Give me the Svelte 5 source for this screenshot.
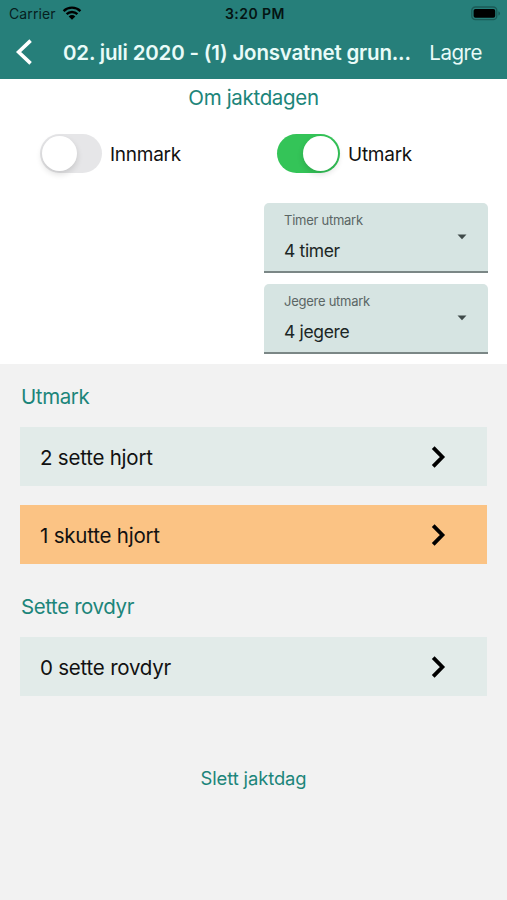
<script>
    let innmark = $state(false);
    let utmark = $state(true);

    const fields = [
        { label: "Timer utmark", value: "4 timer" },
        { label: "Jegere utmark", value: "4 jegere" },
    ];

    const sections = [
        {
            title: "Utmark",
            rows: [
                { text: "2 sette hjort" },
                { text: "1 skutte hjort", warning: true },
            ],
        },
        {
            title: "Sette rovdyr",
            rows: [{ text: "0 sette rovdyr" }],
        },
    ];
</script>

{#snippet toggle(label, checked, onclick)}
    <div class="toggle">
        <button
            class="switch"
            class:on={checked}
            role="switch"
            aria-checked={checked}
            aria-label={label}
            {onclick}
        >
            <span class="knob"></span>
        </button>
        <span class="toggle-label">{label}</span>
    </div>
{/snippet}

<div class="screen">
    <header>
        <div class="status-bar">
            <div class="carrier">
                <span>Carrier</span>
                <svg class="wifi" width="20" height="14" viewBox="0 0 20 14">
                    <path d="M1.6 5.1a12 12 0 0 1 16.8 0M4.6 8.2a7.7 7.7 0 0 1 10.8 0" />
                    <path class="dot" d="M10 13.7L6.7 10.4a4.7 4.7 0 0 1 6.6 0z" />
                </svg>
            </div>
            <span class="time">3:20 PM</span>
            <svg class="battery" width="30" height="15" viewBox="0 0 30 15">
                <rect class="shell" x=".8" y="1" width="25" height="12.6" rx="3.6" />
                <rect x="2.6" y="2.9" width="21.6" height="8.9" rx="1.8" />
                <path class="tip" d="M27.4 5.2c2.2.8 2.2 3.6 0 4.4z" />
            </svg>
        </div>
        <nav>
            <button class="back" aria-label="Tilbake">
                <svg width="18" height="28" viewBox="0 0 18 28">
                    <path d="M15.6 2.6L3.6 14L15.6 25.4" />
                </svg>
            </button>
            <h1>02. juli 2020 - (1) Jonsvatnet grun...</h1>
            <button class="save">Lagre</button>
        </nav>
    </header>

    <section class="about">
        <h2>Om jaktdagen</h2>
        <div class="toggles">
            {@render toggle("Innmark", innmark, () => (innmark = !innmark))}
            {@render toggle("Utmark", utmark, () => (utmark = !utmark))}
        </div>
        <div class="fields">
            {#each fields as field}
                <div class="field">
                    <div class="field-text">
                        <span class="field-label">{field.label}</span>
                        <span class="field-value">{field.value}</span>
                    </div>
                    <svg width="10" height="6" viewBox="0 0 10 6">
                        <path d="M.5.5h9L5 5.3z" />
                    </svg>
                </div>
            {/each}
        </div>
    </section>

    <main>
        {#each sections as section}
            <h3>{section.title}</h3>
            <div class="rows">
                {#each section.rows as row}
                    <button class="row" class:warning={row.warning}>
                        <span>{row.text}</span>
                        <svg width="15" height="24" viewBox="0 0 15 24">
                            <path d="M2.2 2.6L11.4 12L2.2 21.4" />
                        </svg>
                    </button>
                {/each}
            </div>
        {/each}
        <button class="delete">Slett jaktdag</button>
    </main>
</div>

<style>
    :global(body) {
        background: #f2f2f2;
    }

    .screen {
        height: 900px;
        overflow: hidden;
        font-family: "Inter", sans-serif;
        color: #111;
        background: #f2f2f2;
    }

    button {
        padding: 0;
        border: 0;
        background: none;
        font: inherit;
        color: inherit;
        cursor: pointer;
    }

    h1,
    h2,
    h3 {
        margin: 0;
        font-weight: 400;
    }

    svg {
        display: block;
        flex: none;
    }

    header {
        height: 79px;
        background: #267f7a;
    }

    .status-bar {
        display: grid;
        grid-template-columns: 1fr auto 1fr;
        align-items: center;
        height: 27px;
        padding: 0 6px 0 9px;
        font-size: 14px;
        color: #06201e;
    }

    .carrier {
        display: flex;
        align-items: center;
        gap: 6px;
        letter-spacing: 0.1px;
    }

    .wifi {
        margin-top: -2px;
    }

    .wifi path {
        fill: none;
        stroke: #000;
        stroke-width: 2.4;
    }

    .wifi .dot {
        fill: #000;
        stroke: none;
    }

    .time {
        font-size: 14px;
        font-weight: 600;
        letter-spacing: 0.45px;
        color: #041412;
    }

    .battery {
        justify-self: end;
    }

    .battery .shell {
        fill: none;
        stroke: #1b5b57;
        stroke-width: 1.3;
    }

    .battery .tip {
        fill: #1b5b57;
    }

    nav {
        display: flex;
        align-items: center;
        height: 50px;
        padding: 0 25px 0 15px;
        color: #e9fbf8;
    }

    .back {
        margin-right: 30px;
    }

    .back path {
        fill: none;
        stroke: #fff;
        stroke-width: 3.6;
    }

    h1 {
        flex: 1;
        font-size: 20.5px;
        font-weight: 600;
        letter-spacing: -0.19px;
        white-space: nowrap;
    }

    .save {
        font-size: 20.5px;
        letter-spacing: -0.45px;
    }

    .about {
        height: 285px;
        background: #fff;
    }

    h2,
    h3,
    .delete {
        color: #1c857a;
    }

    h2 {
        padding-top: 6px;
        font-size: 20.5px;
        line-height: 26px;
        letter-spacing: -0.33px;
        text-align: center;
    }

    .toggles {
        display: grid;
        grid-template-columns: 237px 1fr;
        padding: 23px 0 0 40px;
    }

    .toggle {
        display: flex;
        align-items: center;
        gap: 8px;
        font-size: 19px;
        letter-spacing: -0.25px;
    }

    .toggle-label {
        padding-top: 1px;
    }

    .switch {
        display: flex;
        box-sizing: border-box;
        width: 62px;
        height: 39px;
        padding: 2px;
        border-radius: 20px;
        background: #e6e6e8;
    }

    .switch.on {
        justify-content: flex-end;
        width: 63px;
        background: #34c458;
    }

    .knob {
        width: 35px;
        height: 35px;
        border-radius: 50%;
        background: #fff;
        box-shadow: 0 3px 6px rgba(0, 0, 0, 0.14);
    }

    .fields {
        display: flex;
        flex-direction: column;
        gap: 11px;
        width: 224px;
        margin: 30px 19px 0 auto;
    }

    .field {
        display: flex;
        align-items: center;
        justify-content: space-between;
        box-sizing: border-box;
        height: 70px;
        padding: 0 21px 0 20px;
        border-bottom: 2px solid #7b8786;
        border-radius: 5px 5px 0 0;
        background: #d6e4e2;
    }

    .field-text {
        display: flex;
        flex-direction: column;
    }

    .field-label {
        font-size: 13px;
        line-height: 18px;
        letter-spacing: -0.26px;
        color: #5b6665;
    }

    .field-value {
        margin-top: 10px;
        font-size: 17.5px;
        line-height: 24px;
        letter-spacing: -0.35px;
        color: #1b2625;
    }

    .field path {
        fill: #3f4a49;
    }

    main {
        padding: 20px 20px 0;
    }

    h3 {
        padding-left: 1px;
        font-size: 20.5px;
        line-height: 26px;
        letter-spacing: -0.4px;
    }

    .rows {
        display: flex;
        flex-direction: column;
        gap: 19px;
        margin: 17px 0 30px;
    }

    .row {
        display: flex;
        align-items: center;
        justify-content: space-between;
        height: 59px;
        padding: 1px 41px 0 20px;
        background: #e2ebe9;
        font-size: 20.5px;
        letter-spacing: -0.22px;
    }

    .row.warning {
        background: #fbc384;
    }

    .row path {
        fill: none;
        stroke: #000;
        stroke-width: 3.8;
    }

    .delete {
        display: block;
        margin: 71px auto 0;
        font-size: 18.4px;
        letter-spacing: -0.1px;
    }
</style>
